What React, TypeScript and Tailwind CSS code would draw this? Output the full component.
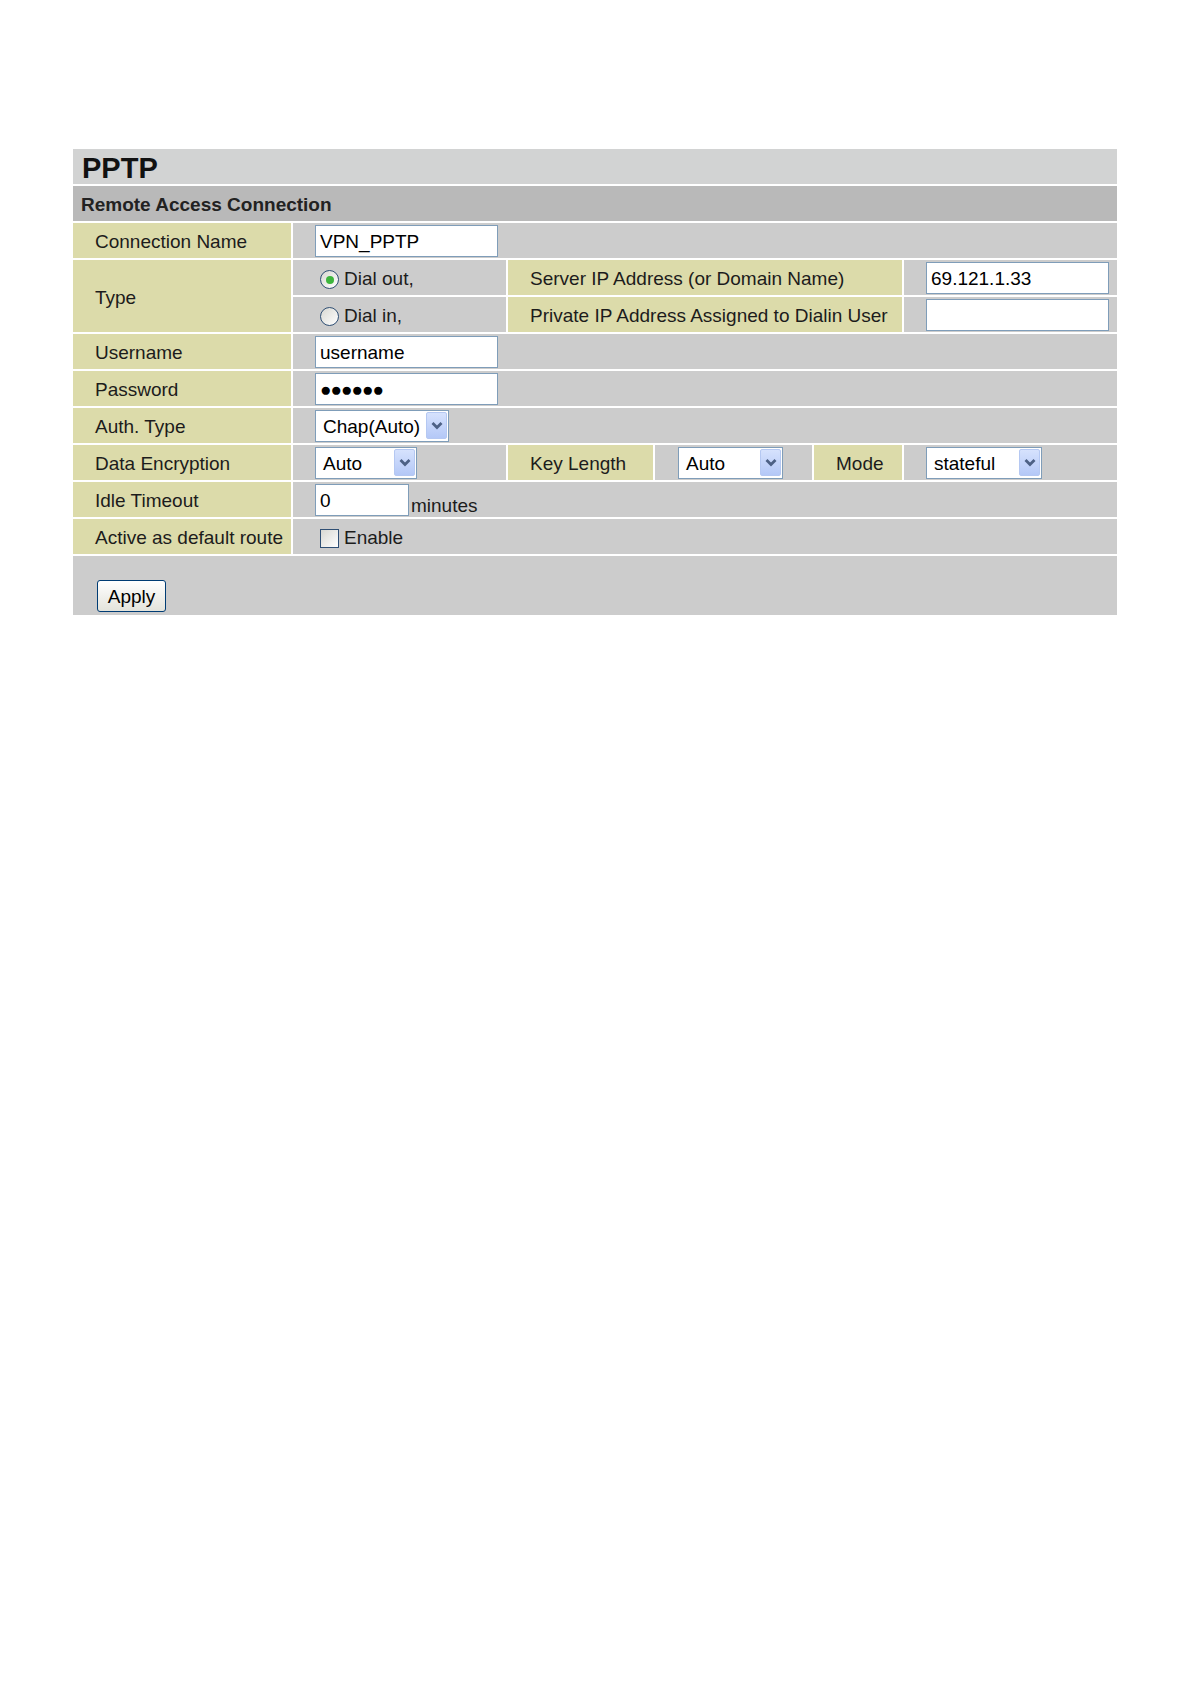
import React from "react";

const font = "font-['Liberation_Sans',Arial,sans-serif]";
const label = "bg-[#dcdbaa] flex items-center pl-[22px] pt-[4px] text-[19px] text-[#1c1c1c]";
const value = "bg-[#cccccc] flex items-center pl-[22px] text-[19px] text-[#1c1c1c]";

function TextBox({ text, width }: { text: string; width: string }) {
  return (
    <div
      className={`${width} h-[32px] bg-white border border-[#7f9db9] flex items-center pl-[4px] pt-[3px] text-[19px] text-black`}
    >
      {text}
    </div>
  );
}

function SelectBox({ text, width }: { text: string; width: string }) {
  return (
    <div
      className={`${width} h-[32px] bg-white border border-[#7f9db9] flex items-center justify-between pl-[7px] pr-[1px] text-[19px] text-black`}
    >
      <span className="pt-[3px]">{text}</span>
      <span className="w-[21px] h-[27px] rounded-[2px] border border-[#b5c8f2] bg-gradient-to-b from-[#d6e2fd] to-[#b4c8f7] flex items-center justify-center">
        <svg width="12" height="9" viewBox="0 0 12 9">
          <path d="M1.5 2 L6 6.5 L10.5 2" fill="none" stroke="#4d6185" strokeWidth="2.8" />
        </svg>
      </span>
    </div>
  );
}

function Radio({ checked }: { checked?: boolean }) {
  return (
    <span className="w-[19px] h-[19px] rounded-full border border-[#2f4f74] bg-gradient-to-br from-[#d8d8d2] to-white flex items-center justify-center mr-[5px]">
      {checked && <span className="w-[8px] h-[8px] rounded-full bg-[#3db53d]" />}
    </span>
  );
}

export default function App() {
  return (
    <div className={`min-h-[1684px] bg-white pt-[149px] pl-[73px] ${font}`}>
      <div className="grid grid-cols-[218px_213px_145px_157px_88px_213px] auto-rows-[35px] gap-[2px] w-[1044px]">
        <div className="col-span-6 bg-[#d2d3d3] flex items-center pl-[9px] pt-[3px] text-[29px] font-bold text-[#111] leading-none">
          PPTP
        </div>
        <div className="col-span-6 bg-[#b9b9b9] flex items-center pl-[8px] pt-[4px] text-[19px] font-bold text-[#222]">
          Remote Access Connection
        </div>

        <div className={label}>Connection Name</div>
        <div className={`${value} col-span-5`}>
          <TextBox text="VPN_PPTP" width="w-[183px]" />
        </div>

        <div className={`${label} row-span-2`}>Type</div>
        <div className={`${value} pl-[27px] pt-[4px]`}>
          <Radio checked />
          Dial out,
        </div>
        <div className={`${label} col-span-3`}>Server IP Address (or Domain Name)</div>
        <div className={value}>
          <TextBox text="69.121.1.33" width="w-[183px]" />
        </div>
        <div className={`${value} pl-[27px] pt-[4px]`}>
          <Radio />
          Dial in,
        </div>
        <div className={`${label} col-span-3`}>Private IP Address Assigned to Dialin User</div>
        <div className={value}>
          <TextBox text="" width="w-[183px]" />
        </div>

        <div className={label}>Username</div>
        <div className={`${value} col-span-5`}>
          <TextBox text="username" width="w-[183px]" />
        </div>

        <div className={label}>Password</div>
        <div className={`${value} col-span-5`}>
          <TextBox text="●●●●●●" width="w-[183px] tracking-[-1px] text-[16px]" />
        </div>

        <div className={label}>Auth. Type</div>
        <div className={`${value} col-span-5`}>
          <SelectBox text="Chap(Auto)" width="w-[134px]" />
        </div>

        <div className={label}>Data Encryption</div>
        <div className={value}>
          <SelectBox text="Auto" width="w-[102px]" />
        </div>
        <div className={label}>Key Length</div>
        <div className={`${value} pl-[23px]`}>
          <SelectBox text="Auto" width="w-[105px]" />
        </div>
        <div className={label}>Mode</div>
        <div className={value}>
          <SelectBox text="stateful" width="w-[116px]" />
        </div>

        <div className={label}>Idle Timeout</div>
        <div className={`${value} col-span-5`}>
          <div className="flex items-end">
            <TextBox text="0" width="w-[94px]" />
            <span className="ml-[2px] leading-[20px]">minutes</span>
          </div>
        </div>

        <div className={label}>Active as default route</div>
        <div className={`${value} col-span-5 pl-[27px] pt-[3px]`}>
          <span className="w-[19px] h-[19px] border border-[#2f4f74] bg-gradient-to-br from-[#d8d8d2] to-white mr-[5px]" />
          Enable
        </div>

        <div className="col-span-6 h-[59px] bg-[#cccccc] pl-[24px] pt-[24px]">
          <button className="w-[69px] h-[32px] rounded-[3px] border border-[#003c74] bg-gradient-to-b from-white to-[#e3e3db] text-[19px] text-black leading-none">
            Apply
          </button>
        </div>
      </div>
    </div>
  );
}
